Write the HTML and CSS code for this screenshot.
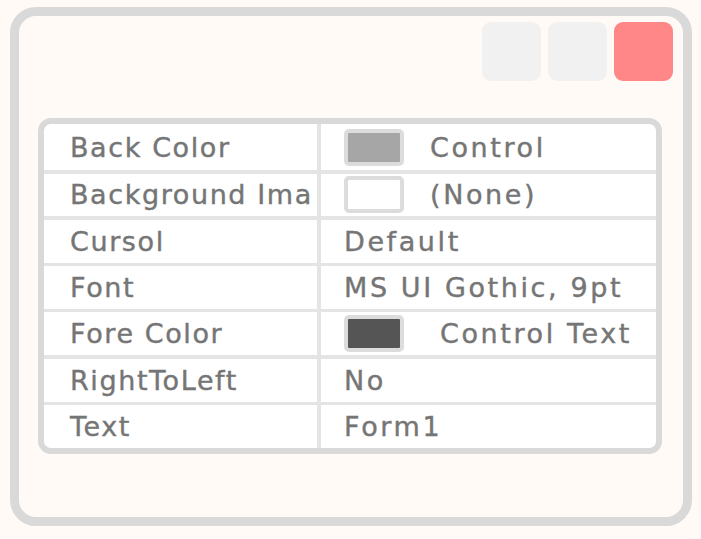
FILE: index.html
```html
<!DOCTYPE html>
<html>
<head>
<meta charset="utf-8">
<link rel="stylesheet" href="styles.css">
</head>
<body>
<div class="window">
  <div class="titlebar">
    <div class="btn"></div>
    <div class="btn"></div>
    <div class="btn close"></div>
  </div>
  <div class="grid">
    <div class="cell label first">Back Color</div>
    <div class="cell value first"><span class="swatch gray"></span><span class="gap26">Control</span></div>
    <div class="cell label">Background Ima</div>
    <div class="cell value"><span class="swatch white"></span><span class="gap26">(None)</span></div>
    <div class="cell label">Cursol</div>
    <div class="cell value">Default</div>
    <div class="cell label">Font</div>
    <div class="cell value">MS UI Gothic, 9pt</div>
    <div class="cell label">Fore Color</div>
    <div class="cell value"><span class="swatch dark"></span><span class="gap36">Control Text</span></div>
    <div class="cell label">RightToLeft</div>
    <div class="cell value">No</div>
    <div class="cell label">Text</div>
    <div class="cell value">Form1</div>
  </div>
</div>
</body>
</html>
```
FILE: styles.css
```css
html, body {
  margin: 0;
  padding: 0;
  background: #fffaf6;
}
body {
  padding: 7px 0 0 10px;
  font-family: "DejaVu Sans", sans-serif;
}
.window {
  box-sizing: border-box;
  width: 682px;
  height: 519px;
  border: 9px solid #d9d9d9;
  border-radius: 26px;
  background: #fffaf6;
  padding: 6px 21px 0 19px;
}
.titlebar {
  display: flex;
  justify-content: flex-end;
  gap: 7px;
  margin-right: -11px;
}
.btn {
  width: 59px;
  height: 59px;
  border-radius: 9px;
  background: #f1f1f1;
}
.btn.close {
  background: #ff8787;
}
.grid {
  margin-top: 37px;
  box-sizing: border-box;
  width: 624px;
  height: 336px;
  border: 6px solid #d9d9d9;
  border-radius: 13px;
  background: #e4e4e4;
  display: grid;
  grid-template-columns: 273px 1fr;
  grid-template-rows: 46px repeat(6, 1fr);
  column-gap: 4px;
  row-gap: 3.5px;
  overflow: hidden;
}
.cell {
  background: #ffffff;
  display: flex;
  align-items: center;
  color: #757575;
  font-size: 27px;
  -webkit-text-stroke: 0.4px #757575;
  white-space: nowrap;
  overflow: hidden;
}
.label {
  padding-left: 26px;
  letter-spacing: 1.6px;
}
.value {
  padding-left: 23px;
  letter-spacing: 2.6px;
}
.swatch {
  box-sizing: border-box;
  display: inline-block;
  width: 60px;
  height: 37px;
  border: 4px solid #dcdcdc;
  border-radius: 5px;
  flex: none;
}
.swatch.gray { background: #a6a6a6; }
.swatch.white { background: #ffffff; }
.swatch.dark { background: #555555; }
.gap26 { margin-left: 26px; }
.gap36 { margin-left: 36px; }
```
